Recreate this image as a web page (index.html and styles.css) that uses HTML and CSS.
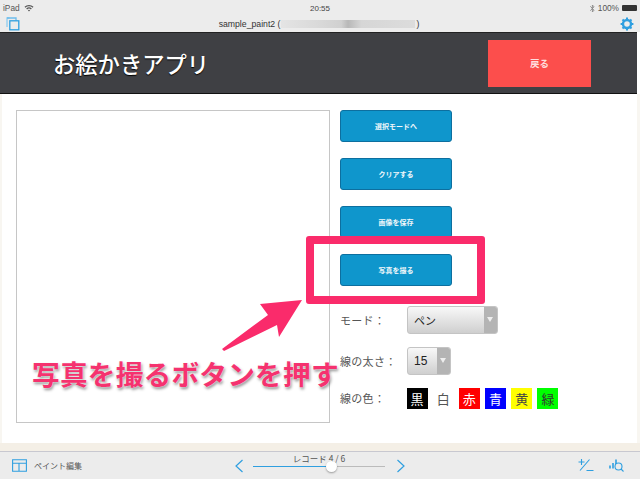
FILE: index.html
```html
<!DOCTYPE html>
<html lang="ja">
<head>
<meta charset="utf-8">
<title>お絵かきアプリ</title>
<link rel="stylesheet" href="styles.css">
</head>
<body>
<div class="ipad">
  <div class="status">
    <div class="status-left">
      <span>iPad</span>
      <svg class="wifi" width="10" height="8" viewBox="0 0 10 8"><path d="M0.5 2.8A6.4 6.4 0 0 1 9.5 2.8L8.6 3.7A5.1 5.1 0 0 0 1.4 3.7Z M2.2 4.5A4 4 0 0 1 7.8 4.5L6.9 5.4A2.7 2.7 0 0 0 3.1 5.4Z M3.9 6.2A1.6 1.6 0 0 1 6.1 6.2L5 7.4Z" fill="#555"/></svg>
    </div>
    <div class="status-time">20:55</div>
    <div class="status-right">
      <svg width="5" height="9" viewBox="0 0 5 9"><path d="M0.3 2.3L4 6.2L2.4 8V1L4 2.8L0.3 6.7" fill="none" stroke="#888" stroke-width="0.9"/></svg>
      <span>100%</span>
      <span class="battery"><span class="battery-fill"></span></span>
    </div>
  </div>
  <div class="navbar">
    <svg class="nav-icon" width="14" height="14" viewBox="0 0 14 14"><path d="M3.5 1H1V10" fill="none" stroke="#8fcdf0" stroke-width="1.3"/><path d="M1 1H10V3.5" fill="none" stroke="#6cbcec" stroke-width="1.3"/><rect x="3.8" y="3.8" width="9" height="9" fill="none" stroke="#2f9fe0" stroke-width="1.3"/></svg>
    <div class="nav-title">sample_paint2 (<span class="blurred"></span>)</div>
    <svg class="nav-icon" width="14" height="14" viewBox="0 0 14 14"><circle cx="7" cy="7" r="4" fill="none" stroke="#2f9fe0" stroke-width="2.4"/><path d="M7 0.6V3M7 11V13.4M0.6 7H3M11 7H13.4M2.5 2.5L4.2 4.2M9.8 9.8L11.5 11.5M11.5 2.5L9.8 4.2M4.2 9.8L2.5 11.5" stroke="#2f9fe0" stroke-width="2"/></svg>
  </div>
  <header class="app-header">
    <h1 class="app-title">お絵かきアプリ</h1>
    <button class="back-btn">戻る</button>
  </header>
  <main class="content">
    <div class="canvas"></div>
    <div class="controls">
      <button class="action">選択モードへ</button>
      <button class="action">クリアする</button>
      <button class="action">画像を保存</button>
      <button class="action">写真を撮る</button>
      <div class="row row-mode">
        <span class="label">モード：</span>
        <div class="select select-mode"><span class="select-value">ペン</span><span class="select-arrow"></span></div>
      </div>
      <div class="row row-width">
        <span class="label">線の太さ：</span>
        <div class="select select-width"><span class="select-value num">15</span><span class="select-arrow"></span></div>
      </div>
      <div class="row row-color">
        <span class="label">線の色：</span>
        <div class="swatches">
          <span class="swatch black">黒</span>
          <span class="swatch white">白</span>
          <span class="swatch red">赤</span>
          <span class="swatch blue">青</span>
          <span class="swatch yellow">黄</span>
          <span class="swatch green">緑</span>
        </div>
      </div>
    </div>
  </main>
  <div class="beige"></div>
  <footer class="toolbar">
    <div class="tb-left">
      <svg width="15" height="13" viewBox="0 0 15 13"><path d="M0.6 0.8H14.4V12.2H0.6ZM0.6 4.2H14.4M7 4.2V12.2" fill="none" stroke="#2f9fe0" stroke-width="1.1"/></svg>
      <span class="tb-label">ペイント編集</span>
    </div>
    <div class="tb-center">
      <svg class="chev" width="10" height="14" viewBox="0 0 10 14"><path d="M8.5 1L2 7L8.5 13" fill="none" stroke="#2f9fe0" stroke-width="1.2"/></svg>
      <div class="slider-wrap">
        <div class="slider-label">レコード 4 / 6</div>
        <div class="slider"><span class="thumb"></span></div>
      </div>
      <svg class="chev chev-next" width="10" height="14" viewBox="0 0 10 14"><path d="M1.5 1L8 7L1.5 13" fill="none" stroke="#2f9fe0" stroke-width="1.2"/></svg>
    </div>
    <div class="tb-right">
      <svg width="16" height="14" viewBox="0 0 16 14"><path d="M0.5 4H6.5M3.5 1V7M2 12.5L11.5 1.5M8.5 12.5H15.5" fill="none" stroke="#2f9fe0" stroke-width="1.1"/></svg>
      <svg width="15" height="14" viewBox="0 0 15 14"><path d="M1 7.5V10.5M4 5V10.5M7 1.5V6" fill="none" stroke="#2f9fe0" stroke-width="1.6"/><circle cx="9.5" cy="8.5" r="3.5" fill="none" stroke="#2f9fe0" stroke-width="1.1"/><path d="M12 11L14.5 13.5" stroke="#2f9fe0" stroke-width="1.1"/></svg>
    </div>
  </footer>

  <div class="callout-box"></div>
  <svg class="callout-arrow" width="90" height="60" viewBox="0 0 90 60"><path d="M1 52L3 54L56 28L58 40L81 3L39 7L47 18Z" fill="#fa2b6b"/></svg>
  <div class="callout-text">写真を撮るボタンを押す</div>
</div>
</body>
</html>
```
FILE: styles.css
```css
* { box-sizing: border-box; }
html, body { margin: 0; padding: 0; }
body { width: 640px; height: 480px; overflow: hidden; font-family: "Liberation Sans", "Noto Sans CJK JP", sans-serif; background: #fff; }
.ipad { position: relative; width: 640px; height: 480px; display: flex; flex-direction: column; background: #fff; }

.status { height: 16px; display: flex; align-items: center; justify-content: space-between; padding: 0 3px; background: #ececec; font-size: 8.3px; color: #555; position: relative; }
.status-left { display: flex; align-items: center; gap: 4px; width: 100px; }
.status-time { font-size: 8px; color: #444; position: relative; left: 0; }
.status-right { display: flex; align-items: center; justify-content: flex-end; gap: 3px; width: 100px; }
.battery { width: 15px; height: 6px; background: #333; border-radius: 1px; display: block; }
.battery-fill { display: block; }

.navbar { height: 16px; display: flex; align-items: center; justify-content: space-between; padding: 0 6px; background: #ececec; }
.nav-title { font-size: 8.7px; color: #333; display: flex; align-items: center; margin-left: -2px; }
.blurred { display: block; width: 134px; height: 8px; margin: 0 1px; background: linear-gradient(90deg, #e4e4e4 0%, #d8d8d8 30%, #d0d0d0 45%, #b8b8b8 50%, #d6d6d6 60%, #dcdcdc 100%); }

.app-header { height: 62px; margin-right: 3px; display: flex; align-items: center; justify-content: space-between; padding: 0 46px 0 53px; background: #3f4044; border-top: 1px solid #222; border-bottom: 1px solid #111; }
.app-title { margin: 0; font-size: 22.3px; line-height: 26px; font-weight: 500; color: #fff; font-family: "Noto Sans CJK JP", sans-serif; text-shadow: 0 1px 1px #000; }
.back-btn { width: 103px; height: 47px; padding: 0; border: 0; background: #fc4e4c; color: #fdd; font-size: 9.5px; font-weight: 700; font-family: "Noto Sans CJK JP", sans-serif; }

.content { height: 349px; display: flex; gap: 10px; padding: 16px 0 0 14px; border-left: 2px solid #f8f6f1; border-right: 3px solid #f8f6f1; background: #fff; }
.canvas { width: 314px; height: 313px; border: 1px solid #c6c6c6; background: #fff; }
.controls { display: flex; flex-direction: column; width: 240px; align-items: flex-start; }
.action { width: 112px; height: 32px; margin-bottom: 16px; padding: 0; border: 1px solid #0d6f9f; border-radius: 3px; background: #0f96cc; color: #f2f8fb; font-size: 7px; font-weight: 700; font-family: "Noto Sans CJK JP", sans-serif; }

.row { display: flex; align-items: center; font-family: "Noto Sans CJK JP", serif; }
.label { width: 67px; font-size: 11px; color: #555; font-family: "Noto Sans CJK JP", serif; letter-spacing: 0.3px; }
.row-mode { height: 28px; margin-top: 4px; }
.row-width { height: 28px; margin-top: 13px; }
.row-color { height: 22px; margin-top: 12px; }
.select { height: 28px; display: flex; align-items: center; justify-content: space-between; border: 1px solid #c4c4c4; border-radius: 3px; background: linear-gradient(#f8f8f8, #cfcfcf); overflow: hidden; }
.select-mode { width: 91px; }
.select-width { width: 44px; }
.select-value { padding-left: 6px; font-size: 11px; color: #222; }
.select-value.num { font-family: "Liberation Sans", sans-serif; font-size: 12px; }
.select-arrow { position: relative; width: 13px; align-self: stretch; background: #b4b4b4; }
.select-arrow::after { content: ""; position: absolute; left: 3px; top: 10px; border: 3.5px solid transparent; border-top: 5px solid #eee; }

.swatches { display: flex; gap: 5.2px; margin-left: -0.5px; }
.swatch { width: 21px; height: 21px; display: flex; align-items: center; justify-content: center; font-size: 13px; line-height: 1; font-family: "Noto Sans CJK JP", serif; }
.black { background: #000; color: #fff; }
.white { background: #fff; color: #555; }
.red { background: #f00; color: #fff; }
.blue { background: #00f; color: #fff; }
.yellow { background: #ff0; color: #444; }
.green { background: #0f0; color: #333; }

.beige { height: 8px; background: #f4efe6; }
.toolbar { height: 28px; display: flex; align-items: center; position: relative; padding: 0 16px 0 12px; justify-content: space-between; background: #ececec; border-top: 1px solid #c8c8d0; }
.tb-left { display: flex; align-items: center; gap: 7px; margin-top: -1px; }
.tb-label { font-size: 8px; color: #555; font-family: "Noto Sans CJK JP", sans-serif; }
.tb-center { position: absolute; left: 234px; top: 1px; height: 26px; display: flex; align-items: flex-start; gap: 9px; }
.chev { margin-top: 6px; }
.chev-next { margin-left: 2px; }
.slider-wrap { width: 132px; display: flex; flex-direction: column; align-items: center; }
.slider-label { font-size: 8.5px; line-height: 10px; color: #555; font-family: "Noto Sans CJK JP", serif; margin-bottom: 3px; }
.slider { position: relative; width: 132px; height: 1px; background: linear-gradient(90deg, #2f9fe0 58%, #bbb 58%); }
.thumb { position: absolute; left: 73px; top: -5px; width: 11px; height: 11px; border-radius: 50%; background: #fff; box-shadow: 0 1px 2px rgba(0,0,0,.35); }
.tb-right { display: flex; align-items: center; gap: 15px; margin-top: -2px; }

.callout-box { position: absolute; left: 306px; top: 236px; width: 179px; height: 68px; border: 8px solid #fa2b6b; border-radius: 3px; }
.callout-arrow { position: absolute; left: 221px; top: 297px; }
.callout-text { position: absolute; left: 32px; top: 355px; font-size: 27.7px; line-height: 36px; letter-spacing: 0.2px; font-weight: 700; color: #f5326f; font-family: "Noto Sans CJK JP", sans-serif; white-space: nowrap; text-shadow: 0 0 2px #fff, 1px 2px 3px rgba(0,0,0,.45); }
```
